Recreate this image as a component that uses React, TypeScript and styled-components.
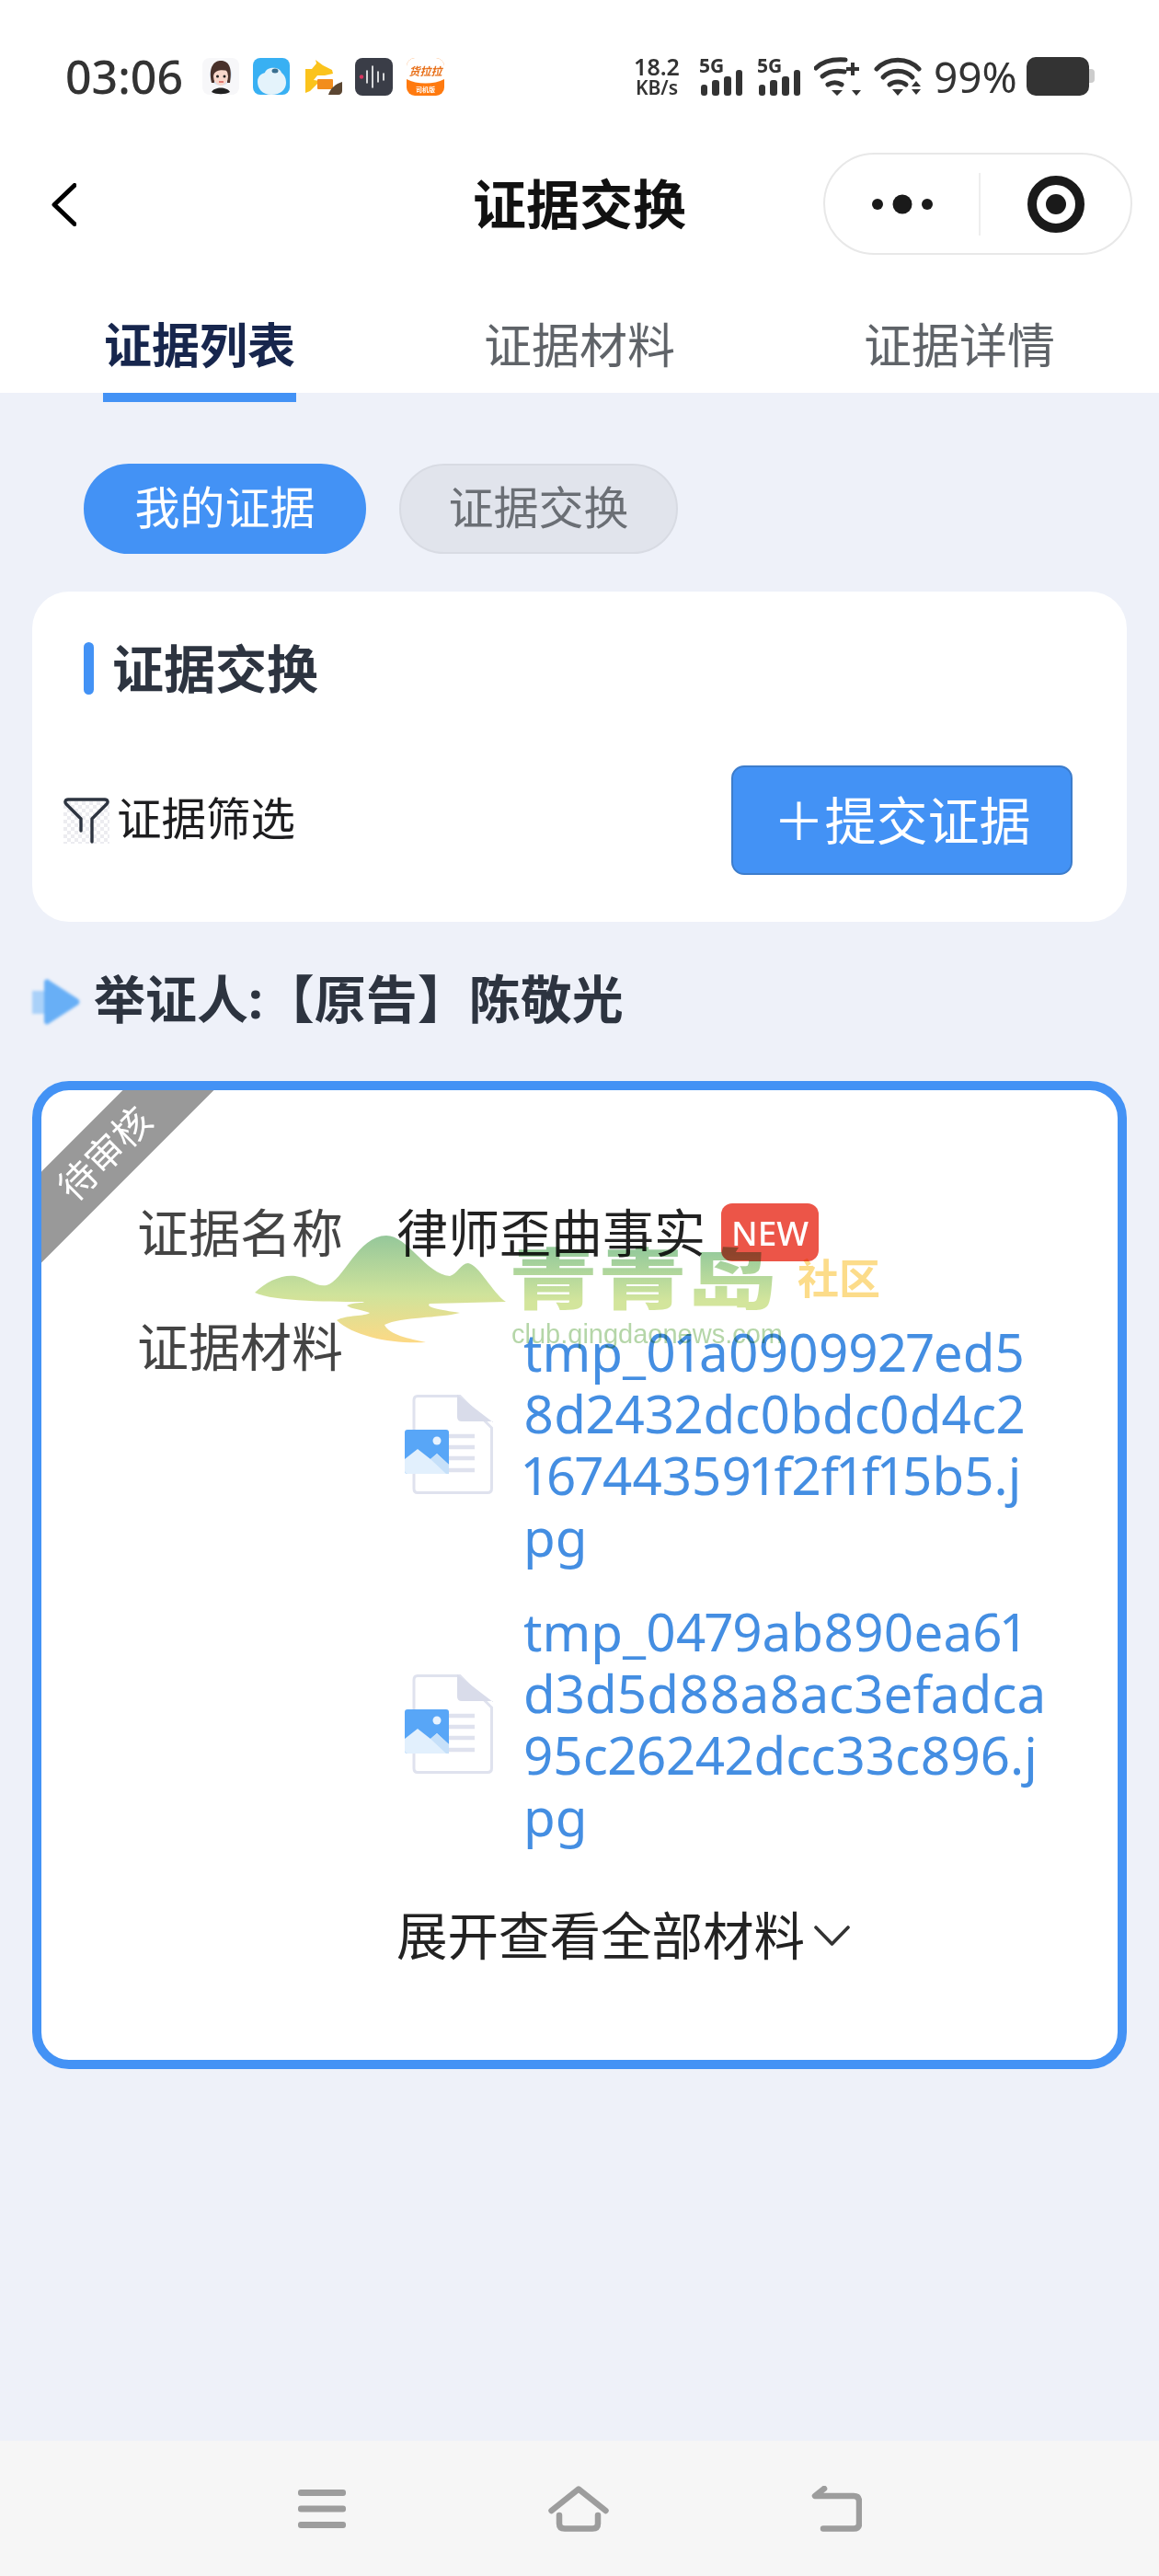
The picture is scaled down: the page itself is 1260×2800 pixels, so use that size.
import React from "react";
import styled, { createGlobalStyle } from "styled-components";

const BLUE = "#4392f5";
const FONT = `"Noto Sans", "Noto Sans CJK SC", sans-serif`;

const GlobalStyle = createGlobalStyle`
  html, body {
    margin: 0;
    padding: 0;
    background: #eef1f9;
  }
  * {
    box-sizing: border-box;
  }
`;

const Page = styled.div`
  position: relative;
  width: 1260px;
  height: 2800px;
  display: flex;
  flex-direction: column;
  overflow: hidden;
  background: #eef1f9;
  font-family: ${FONT};
`;

const Header = styled.header`
  background: #fff;
`;

const StatusBar = styled.div`
  height: 166px;
  padding: 0 70px 0 71px;
  display: flex;
  align-items: center;
  justify-content: space-between;
  color: #333;
`;

const StatusLeft = styled.div`
  display: flex;
  align-items: center;
  gap: 14.5px;
`;

const Clock = styled.span`
  font-size: 50px;
  font-weight: 500;
  line-height: 1;
  margin-right: 6px;
`;

const StatusRight = styled.div`
  display: flex;
  align-items: center;
  gap: 13px;
`;

const Speed = styled.div`
  width: 50px;
  margin-right: 7px;
  text-align: center;
  font-weight: 600;
  white-space: nowrap;
`;

const SpeedValue = styled.div`
  font-size: 25px;
  line-height: 25px;
`;

const SpeedUnit = styled.div`
  font-size: 21px;
  line-height: 21px;
`;

const Percent = styled.span`
  width: 88px;
  font-size: 46px;
  line-height: 1;
  white-space: nowrap;
`;

const Battery = styled.div`
  position: relative;
  width: 68px;
  height: 42px;
  margin-right: 6px;
  border-radius: 10px;
  background: #333;
  &::after {
    content: "";
    position: absolute;
    left: 100%;
    top: 13px;
    width: 6px;
    height: 15px;
    border-radius: 0 4px 4px 0;
    background: #ccc;
  }
`;

const NavBar = styled.div`
  height: 111px;
  padding: 0 29px;
  display: grid;
  grid-template-columns: 1fr auto 1fr;
  align-items: center;
`;

const BackSlot = styled.div`
  padding: 2px 0 0 27px;
  display: flex;
  align-items: center;
`;

const Title = styled.h1`
  margin: 0;
  font-size: 58px;
  line-height: 1;
  font-weight: 700;
  color: #111;
`;

const Capsule = styled.div`
  justify-self: end;
  width: 336px;
  height: 111px;
  display: grid;
  grid-template-columns: 167px 2px 1fr;
  align-items: center;
  justify-items: center;
  border: 2px solid #e8e8e8;
  border-radius: 56px;
`;

const CapsuleDivider = styled.span`
  width: 2px;
  height: 68px;
  background: #eeeeee;
`;

const Tabs = styled.nav`
  height: 150px;
  padding: 0 10.5px;
  display: grid;
  grid-template-columns: repeat(3, 413px);
`;

const Tab = styled.div<{ $active?: boolean }>`
  position: relative;
  padding-top: 68px;
  text-align: center;
  font-size: 52px;
  line-height: 60px;
  font-weight: ${(p) => (p.$active ? 700 : 400)};
  color: ${(p) => (p.$active ? "#17264d" : "#5f6368")};
  ${(p) =>
    p.$active &&
    `&::after {
      content: "";
      position: absolute;
      left: 101px;
      top: 100%;
      width: 210px;
      height: 10px;
      background: ${BLUE};
    }`}
`;

const Content = styled.main`
  flex: 1;
  padding: 77px 35px 0;
`;

const Pills = styled.div`
  display: flex;
  gap: 36px;
  padding-left: 56px;
`;

const Pill = styled.div<{ $active?: boolean }>`
  width: ${(p) => (p.$active ? 307 : 303)}px;
  height: 98px;
  padding-bottom: 10px;
  display: flex;
  align-items: center;
  justify-content: center;
  border-radius: 49px;
  font-size: 49px;
  background: ${(p) => (p.$active ? BLUE : "#e1e4ec")};
  color: ${(p) => (p.$active ? "#fff" : "#6b6f75")};
  border: 2px solid ${(p) => (p.$active ? BLUE : "#d8dbe3")};
`;

const ToolCard = styled.section`
  margin-top: 41px;
  height: 359px;
  padding: 55px 59px 51px 34px;
  border-radius: 40px;
  background: #fff;
`;

const CardHeading = styled.h2`
  margin: 0 0 77px 22px;
  height: 57px;
  display: flex;
  align-items: center;
  gap: 20px;
  font-size: 56px;
  line-height: 57px;
  font-weight: 700;
  color: #2d3440;
  &::before {
    content: "";
    width: 11px;
    height: 57px;
    border-radius: 6px;
    background: ${BLUE};
  }
`;

const ToolRow = styled.div`
  display: flex;
  align-items: center;
  justify-content: space-between;
`;

const FilterLabel = styled.div`
  display: flex;
  align-items: center;
  gap: 8px;
  font-size: 48.5px;
  color: #1d1d1f;
`;

const FilterText = styled.span`
  margin-bottom: 10px;
`;

const SubmitButton = styled.div`
  width: 371px;
  height: 119px;
  padding-bottom: 6px;
  display: flex;
  align-items: center;
  justify-content: center;
  border: 2px solid #3d7dcc;
  border-radius: 14px;
  background: ${BLUE};
  color: #fff;
  font-size: 56px;
`;

const Witness = styled.div`
  height: 173px;
  display: flex;
  align-items: center;
  gap: 15px;
  font-size: 56px;
  font-weight: 700;
  color: #2d3440;
`;

const WitnessName = styled.span`
  margin-bottom: 12px;
`;

const EvidenceCard = styled.section`
  position: relative;
  overflow: hidden;
  padding: 121px 0 102px 104px;
  border: 10px solid ${BLUE};
  border-radius: 40px;
  background: #fff;
`;

const Ribbon = styled.div`
  position: absolute;
  left: -131px;
  top: 34px;
  width: 400px;
  height: 70px;
  transform: rotate(-45deg);
  background: #999;
  color: #fff;
  text-align: center;
  font-size: 41px;
  line-height: 68px;
`;

const FieldRow = styled.div`
  display: grid;
  grid-template-columns: 282px 1fr;
  font-size: 56px;
  line-height: 67px;
  & + & {
    margin-top: 57px;
  }
`;

const FieldLabel = styled.div`
  color: #444;
`;

const FieldValue = styled.div`
  display: flex;
  align-items: center;
  color: #222;
`;

const NewBadge = styled.span`
  width: 106px;
  height: 63px;
  margin-left: 17px;
  display: flex;
  align-items: center;
  justify-content: center;
  border-radius: 12px;
  background: #ec5548;
  color: #fff;
  font-size: 37px;
  font-weight: 500;
  line-height: 1;
`;

const FileList = styled.div`
  padding: 6px 0 0 9px;
  display: flex;
  flex-direction: column;
  gap: 36px;
`;

const FileItem = styled.div`
  display: flex;
  align-items: center;
  gap: 33px;
`;

const FileName = styled.div`
  font-size: 56.5px;
  line-height: 67px;
  font-variant-numeric: proportional-nums;
  color: #448ee2;
`;

const FileLine = styled.div`
  white-space: nowrap;
`;

const ExpandRow = styled.div`
  margin: 62px 0 0 282px;
  display: flex;
  align-items: center;
  gap: 10px;
  font-size: 55.5px;
  line-height: 67px;
  color: #222;
`;

const BottomBar = styled.footer`
  height: 147px;
  padding-left: 324px;
  display: flex;
  align-items: center;
  gap: 220px;
  background: #f6f6f6;
`;

const Watermark = styled.div`
  position: absolute;
  left: 277px;
  top: 1343px;
  display: flex;
  gap: 3px;
  mix-blend-mode: multiply;
  pointer-events: none;
`;

const WatermarkText = styled.div`
  display: flex;
  flex-direction: column;
`;

const BrandRow = styled.div`
  display: flex;
  align-items: center;
  gap: 23px;
  height: 92px;
`;

const Brand = styled.span`
  font-size: 97px;
  line-height: 97px;
  font-weight: 900;
  transform: scaleY(0.74);
  background: linear-gradient(#97cb9b 10%, #d3e59c 85%);
  -webkit-background-clip: text;
  background-clip: text;
  color: transparent;
`;

const BrandSide = styled.span`
  font-size: 45px;
  line-height: 45px;
  font-weight: 700;
  color: #fcdc8a;
`;

const BrandUrl = styled.div`
  font-family: "Liberation Sans", sans-serif;
  font-size: 29px;
  line-height: 30px;
  color: #b5d6a8;
  padding-left: 3px;
`;

const AppIcon = ({ kind }: { kind: number }) => {
  const art = [
    <g key="a">
      <rect width="40" height="40" rx="8" fill="#f7f7f9" />
      <circle cx="20" cy="18" r="12" fill="#d6e6f6" />
      <path d="M10 27 C6 8 14 3 20 3 C28 3 33 9 30 27 L27 27 C28 16 24 12 19 12 C15 15 13 20 13 27Z" fill="#4a322b" />
      <ellipse cx="20" cy="20" rx="8" ry="10" fill="#f8d7cb" />
      <path d="M11 10 C15 5 25 5 28 14 C22 13 16 12 12 18Z" fill="#4a322b" />
      <circle cx="16.5" cy="20" r="1.5" fill="#222" />
      <circle cx="24" cy="20" r="1.5" fill="#222" />
      <path d="M18 26 h5" stroke="#d9534f" strokeWidth="1.4" />
      <path d="M10 37 C13 31 27 31 30 37 C25 40 15 40 10 37Z" fill="#222" />
    </g>,
    <g key="b">
      <rect width="40" height="40" rx="8" fill="#38b0f3" />
      <path d="M5 26 C5 19 10 17 13 16 C15 9 29 9 31 16 C35 19 36 23 36 27 C36 34 30 40 20 40 C10 40 5 33 5 26Z" fill="#e4f3fb" />
      <ellipse cx="24" cy="14" rx="3.5" ry="2.5" fill="#3a6f8f" />
    </g>,
    <g key="c">
      <rect width="41" height="40" rx="8" fill="#fff" />
      <path d="M1 12 L8 12 L13 6 L12 2 L20 8 L30 13 L31 17 L22 19 L14 19 L10 24 L17 25 L6 36 L1 38Z" fill="#fbc31c" />
      <rect x="14" y="23" width="17" height="11" rx="1" fill="#f28d1d" />
      <path d="M26 40 C28 33 34 28 41 26 L41 36 C41 38 39 40 37 40Z" fill="#5b4632" />
    </g>,
    <g key="d">
      <rect width="41" height="41" rx="8" fill="#3a3d47" />
      <circle cx="7" cy="20.5" r="2.2" fill="#d8355f" />
      <path d="M13 14 V27 M19 9 V32 M25 15 V26 M31 17 V24" stroke="#fff" strokeWidth="1.6" strokeLinecap="round" />
    </g>,
    <g key="e">
      <rect width="41" height="41" rx="9" fill="#ff7a0f" />
      <path d="M0 9 A9 9 0 0 1 9 0 H32 A9 9 0 0 1 41 9 V23 C30 29 11 29 0 23Z" fill="#fff" />
      <text x="20.5" y="19" textAnchor="middle" fontSize="12" fontWeight="700" fontStyle="italic" fill="#e8701a">
        货拉拉
      </text>
      <text x="20.5" y="37" textAnchor="middle" fontSize="7" fontWeight="700" fill="#fff">
        司机版
      </text>
    </g>,
  ];
  return (
    <svg width="41" height="41" viewBox="0 0 41 41">
      {art[kind]}
    </svg>
  );
};

const SignalIcon = () => (
  <svg width="50" height="42" viewBox="0 0 50 42" overflow="visible">
    <text x="1" y="17" fontSize="21" fontWeight="700" fill="#333" fontFamily={FONT}>
      5G
    </text>
    <rect x="3" y="30" width="7" height="12" rx="3" fill="#333" />
    <rect x="15" y="25" width="8" height="17" rx="3" fill="#333" />
    <rect x="28" y="21" width="8" height="21" rx="3" fill="#333" />
    <rect x="41" y="14" width="7" height="28" rx="3" fill="#333" />
  </svg>
);

const WifiIcon = ({ plus }: { plus?: boolean }) => (
  <svg width="52" height="42" viewBox="0 0 52 42" fill="none" stroke="#333" strokeWidth="5" strokeLinecap="round">
    {plus ? (
      <>
        <path d="M2 12 C10 4 20 2 34 3" />
        <path d="M9 21 C15 16 23 14 33 16" />
        <path d="M15 30 C20 27 25 27 30 30" />
        <path d="M42 6 V20 M35 13 H49" strokeWidth="4" strokeLinecap="butt" />
        <path d="M19 36 H31 L25 42Z M41 36 H51 L46 42Z" fill="#333" stroke="none" />
      </>
    ) : (
      <>
        <path d="M3 13 C15 0 37 0 49 13" />
        <path d="M10 22 C18 13 34 13 42 22" />
        <path d="M17 30 C22 26 30 26 35 30" />
        <path d="M20 35 H32 L26 42Z M41 32 L46 26 L51 32Z M41 35 H51 L46 41Z" fill="#333" stroke="none" />
      </>
    )}
  </svg>
);

const BackIcon = () => (
  <svg width="27" height="47" viewBox="0 0 27 47" fill="none" stroke="#000" strokeWidth="5" strokeLinecap="round" strokeLinejoin="round">
    <path d="M25 2.5 L3 23.5 L25 44.5" />
  </svg>
);

const MoreIcon = () => (
  <svg width="66" height="24" viewBox="0 0 66 24" fill="#1a1a1a">
    <circle cx="6" cy="12" r="6" />
    <circle cx="33" cy="12" r="10.5" />
    <circle cx="60" cy="12" r="6" />
  </svg>
);

const TargetIcon = () => (
  <svg width="62" height="62" viewBox="0 0 62 62">
    <circle cx="31" cy="31" r="26" fill="none" stroke="#1a1a1a" strokeWidth="10" />
    <circle cx="31" cy="31" r="11" fill="#1a1a1a" />
  </svg>
);

const FilterIcon = () => (
  <svg width="50" height="50" viewBox="0 0 50 50">
    <defs>
      <pattern id="checker" width="8" height="8" patternUnits="userSpaceOnUse">
        <rect width="4" height="4" fill="#ececf0" />
        <rect x="4" y="4" width="4" height="4" fill="#ececf0" />
      </pattern>
    </defs>
    <rect y="4" width="50" height="46" fill="url(#checker)" />
    <path
      d="M5 2 H45 C48 2 49 5 47 7 L31 23 V48 M5 2 C2 2 1 5 3 7 L19 23 V36"
      fill="none"
      stroke="#2d3440"
      strokeWidth="3.4"
      strokeLinecap="round"
      strokeLinejoin="round"
    />
  </svg>
);

const PlayIcon = () => (
  <svg width="52" height="50" viewBox="0 0 52 50" style={{ filter: "blur(1.5px)" }}>
    <rect x="0" y="13" width="13" height="25" fill="#a9d1f9" />
    <path d="M13 3 C14 0 17 0 19 2 L50 22 C52 24 52 26 50 28 L19 48 C17 50 14 50 13 47Z" fill="#68aff6" />
  </svg>
);

const FileIcon = () => (
  <svg width="96" height="108" viewBox="0 0 96 108">
    <path d="M14 1.5 H60 L94.5 36 V102 Q94.5 106.5 90 106.5 H14 Q10 106.5 10 102 V6 Q10 1.5 14 1.5Z" fill="#fff" stroke="#dfe2ee" strokeWidth="3" />
    <path d="M57 0 L96 30 V29 H62 Q57 29 57 24Z" fill="#d9dcea" />
    <path d="M48 45 H76 M48 57 H76 M48 69 H76 M48 82 H76" stroke="#dfe2ee" strokeWidth="4.5" />
    <rect x="0" y="38" width="48" height="48" rx="3" fill="#58a6f7" />
    <circle cx="35" cy="50" r="4.5" fill="#e8f3ff" />
    <path d="M0 70 L14 59 L28 70 L35 64 L48 76 V83 Q48 86 45 86 H3 Q0 86 0 83Z" fill="#e2f0fd" />
    <path d="M28 70 L35 64 L48 76 V86 H45Z" fill="#c6e0f9" />
  </svg>
);

const ChevronIcon = () => (
  <svg width="39" height="22" viewBox="0 0 39 22" fill="none" stroke="#333" strokeWidth="3.6" strokeLinecap="round" strokeLinejoin="round">
    <path d="M2 2 L19.5 20 L37 2" />
  </svg>
);

const MenuIcon = () => (
  <svg width="52" height="42" viewBox="0 0 52 42" fill="#9d9d9d">
    <rect y="0" width="52" height="7" rx="3" />
    <rect y="17.5" width="52" height="7" rx="3" />
    <rect y="35" width="52" height="7" rx="3" />
  </svg>
);

const HomeIcon = () => (
  <svg width="66" height="50" viewBox="0 0 66 50" fill="none" stroke="#9d9d9d" strokeWidth="6.5" strokeLinecap="round" strokeLinejoin="round">
    <path d="M3.5 27 L33 3.5 L62.5 27" />
    <path d="M12 32 V41 Q12 46.5 18 46.5 H48 Q54 46.5 54 41 V32" />
  </svg>
);

const ReturnIcon = () => (
  <svg width="55" height="50" viewBox="0 0 55 50" fill="none" stroke="#9d9d9d" strokeWidth="6.5" strokeLinecap="round" strokeLinejoin="round">
    <path d="M14 3 L4 11 H46 Q52 11 52 17 V41 Q52 46.5 46 46.5 H13" />
  </svg>
);

const Mountain = () => (
  <svg width="273" height="118" viewBox="0 0 273 118">
    <defs>
      <linearGradient id="mountain" x1="0" y1="0" x2="0" y2="1">
        <stop offset="0" stopColor="#95c79a" />
        <stop offset="0.55" stopColor="#cfe39b" />
        <stop offset="1" stopColor="#fdd985" />
      </linearGradient>
    </defs>
    <path
      d="M0 62 C12 50 30 42 44 44 C58 46 66 56 78 54 C96 50 112 0 143 0 C166 0 186 42 212 44 C220 42 224 30 232 30 C244 32 258 62 273 72 L190 74 C186 78 196 80 223 84 C200 90 160 88 141 97 C146 108 168 112 186 116 C150 118 108 110 89 92 C100 86 120 88 125 84 C115 80 105 80 100 76 C108 72 118 74 119 72 C90 72 20 72 0 62Z"
      fill="url(#mountain)"
    />
  </svg>
);

const files = [
  ["tmp_01a0909927ed5", "8d2432dc0bdc0d4c2", "167443591f2f1f15b5.j", "pg"],
  ["tmp_0479ab890ea61", "d3d5d88a8ac3efadca", "95c26242dcc33c896.j", "pg"],
];

export default function App() {
  return (
    <Page>
      <GlobalStyle />
      <Header>
        <StatusBar>
          <StatusLeft>
            <Clock>03:06</Clock>
            {[0, 1, 2, 3, 4].map((k) => (
              <AppIcon key={k} kind={k} />
            ))}
          </StatusLeft>
          <StatusRight>
            <Speed>
              <SpeedValue>18.2</SpeedValue>
              <SpeedUnit>KB/s</SpeedUnit>
            </Speed>
            <SignalIcon />
            <SignalIcon />
            <WifiIcon plus />
            <WifiIcon />
            <Percent>99%</Percent>
            <Battery />
          </StatusRight>
        </StatusBar>
        <NavBar>
          <BackSlot>
            <BackIcon />
          </BackSlot>
          <Title>证据交换</Title>
          <Capsule>
            <MoreIcon />
            <CapsuleDivider />
            <TargetIcon />
          </Capsule>
        </NavBar>
        <Tabs>
          <Tab $active>证据列表</Tab>
          <Tab>证据材料</Tab>
          <Tab>证据详情</Tab>
        </Tabs>
      </Header>
      <Content>
        <Pills>
          <Pill $active>我的证据</Pill>
          <Pill>证据交换</Pill>
        </Pills>
        <ToolCard>
          <CardHeading>证据交换</CardHeading>
          <ToolRow>
            <FilterLabel>
              <FilterIcon />
              <FilterText>证据筛选</FilterText>
            </FilterLabel>
            <SubmitButton>＋提交证据</SubmitButton>
          </ToolRow>
        </ToolCard>
        <Witness>
          <PlayIcon />
          <WitnessName>举证人:【原告】陈敬光</WitnessName>
        </Witness>
        <EvidenceCard>
          <Ribbon>待审核</Ribbon>
          <FieldRow>
            <FieldLabel>证据名称</FieldLabel>
            <FieldValue>
              律师歪曲事实
              <NewBadge>NEW</NewBadge>
            </FieldValue>
          </FieldRow>
          <FieldRow>
            <FieldLabel>证据材料</FieldLabel>
            <FileList>
              {files.map((lines) => (
                <FileItem key={lines[0]}>
                  <FileIcon />
                  <FileName>
                    {lines.map((line) => (
                      <FileLine key={line}>{line}</FileLine>
                    ))}
                  </FileName>
                </FileItem>
              ))}
            </FileList>
          </FieldRow>
          <ExpandRow>
            展开查看全部材料
            <ChevronIcon />
          </ExpandRow>
        </EvidenceCard>
      </Content>
      <BottomBar>
        <MenuIcon />
        <HomeIcon />
        <ReturnIcon />
      </BottomBar>
      <Watermark>
        <Mountain />
        <WatermarkText>
          <BrandRow>
            <Brand>青青岛</Brand>
            <BrandSide>社区</BrandSide>
          </BrandRow>
          <BrandUrl>club.qingdaonews.com</BrandUrl>
        </WatermarkText>
      </Watermark>
    </Page>
  );
}
